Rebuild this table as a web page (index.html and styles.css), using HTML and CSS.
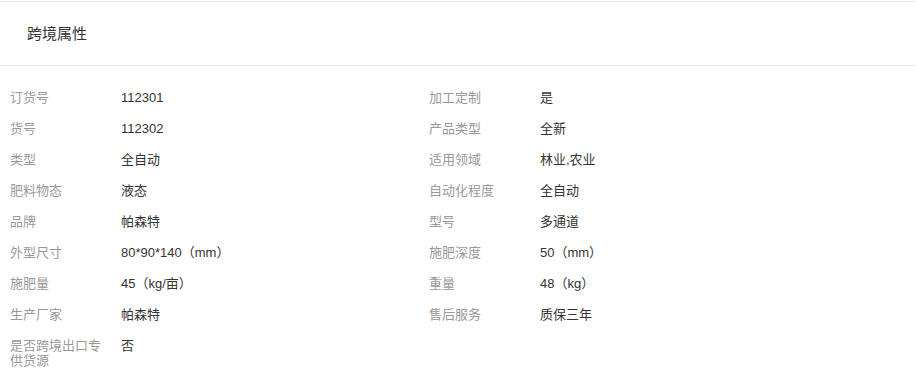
FILE: index.html
```html
<!DOCTYPE html>
<html lang="zh-CN">
<head>
  <meta charset="UTF-8">
  <title>跨境属性</title>
  <link rel="stylesheet" href="styles.css">
</head>
<body>

  <div class="panel">
    <div class="panel-head">跨境属性</div>

    <ul class="attr-list">
      <li class="attr"><span class="attr-name">订货号</span><span class="attr-value">112301</span></li>
      <li class="attr"><span class="attr-name">加工定制</span><span class="attr-value">是</span></li>
      <li class="attr"><span class="attr-name">货号</span><span class="attr-value">112302</span></li>
      <li class="attr"><span class="attr-name">产品类型</span><span class="attr-value">全新</span></li>
      <li class="attr"><span class="attr-name">类型</span><span class="attr-value">全自动</span></li>
      <li class="attr"><span class="attr-name">适用领域</span><span class="attr-value">林业,农业</span></li>
      <li class="attr"><span class="attr-name">肥料物态</span><span class="attr-value">液态</span></li>
      <li class="attr"><span class="attr-name">自动化程度</span><span class="attr-value">全自动</span></li>
      <li class="attr"><span class="attr-name">品牌</span><span class="attr-value">帕森特</span></li>
      <li class="attr"><span class="attr-name">型号</span><span class="attr-value">多通道</span></li>
      <li class="attr"><span class="attr-name">外型尺寸</span><span class="attr-value">80*90*140（mm）</span></li>
      <li class="attr"><span class="attr-name">施肥深度</span><span class="attr-value">50（mm）</span></li>
      <li class="attr"><span class="attr-name">施肥量</span><span class="attr-value">45（kg/亩）</span></li>
      <li class="attr"><span class="attr-name">重量</span><span class="attr-value">48（kg）</span></li>
      <li class="attr"><span class="attr-name">生产厂家</span><span class="attr-value">帕森特</span></li>
      <li class="attr"><span class="attr-name">售后服务</span><span class="attr-value">质保三年</span></li>
      <li class="attr"><span class="attr-name">是否跨境出口专供货源</span><span class="attr-value">否</span></li>
    </ul>
  </div>

</body>
</html>
```

FILE: styles.css
```css
html, body {
  margin: 0;
  padding: 0;
  background: #fff;
  color: #333;
  font-family: "Liberation Sans", "Noto Sans CJK SC", sans-serif;
}

.panel {
  width: 916px;
  margin-top: 1px;
  border-top: 1px solid #e8e8e8;
}

.panel-head {
  display: flex;
  align-items: center;
  height: 60px;
  padding: 0 0 3px 27px;
  font-size: 15px;
  color: #333;
  border-bottom: 1px solid #e8e8e8;
}

.attr-list {
  display: grid;
  grid-template-columns: 419px 419px;
  margin: 0;
  padding: 16px 0 0 10px;
  list-style: none;
  font-size: 13px;
  line-height: 15px;
}

.attr {
  display: flex;
  padding: 8px 0;
}

.attr-name {
  flex: none;
  width: 101px;
  padding-right: 10px;
  color: #999;
}

.attr-value {
  color: #333;
}
```
